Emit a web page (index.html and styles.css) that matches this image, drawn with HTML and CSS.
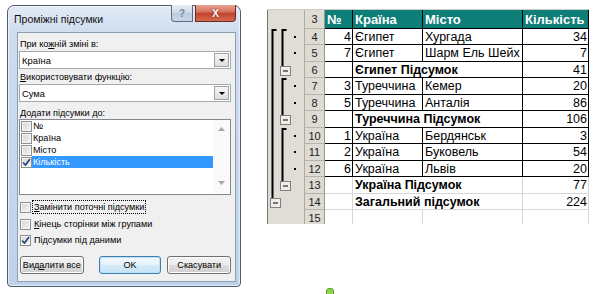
FILE: index.html
```html
<!DOCTYPE html>
<html lang="uk">
<head>
    <meta charset="UTF-8">
    <title>Проміжні підсумки</title>
    <link rel="stylesheet" href="styles.css">
</head>
<body>
    <div class="page">
        <div class="window">
            <div class="titlebar">
                <span class="title">Проміжні підсумки</span>
                <div class="caption-btns">
                    <span class="btn-help">?</span>
                    <span class="btn-close">X</span>
                </div>
            </div>
            <div class="client">
                <div class="label lbl-first">При ко<u>ж</u>ній зміні в:</div>
                <div class="combo"><span>Країна</span><span class="drop"></span></div>
                <div class="label lbl-second"><u>В</u>икористовувати функцію:</div>
                <div class="combo"><span>Сума</span><span class="drop"></span></div>
                <div class="label lbl-third"><u>Д</u>одати підсумки до:</div>
                <div class="listbox">
                    <div class="items">
                        <div class="item"><span class="cb"></span><span class="txt">№</span></div>
                        <div class="item"><span class="cb"></span><span class="txt">Країна</span></div>
                        <div class="item"><span class="cb"></span><span class="txt">Місто</span></div>
                        <div class="item sel">
                            <span class="cb"><svg width="9" height="9" viewBox="0 0 9 9"><path d="M1 4.5L3.5 7L8 1" fill="none" stroke="#21407a" stroke-width="1.6"/></svg></span>
                            <span class="txt">Кількість</span>
                        </div>
                    </div>
                    <div class="vscroll">
                        <svg width="7" height="4" viewBox="0 0 7 4"><path d="M0 4L3.5 0L7 4Z" fill="#a8a8a8"/></svg>
                        <svg width="7" height="4" viewBox="0 0 7 4"><path d="M0 0L3.5 4L7 0Z" fill="#a8a8a8"/></svg>
                    </div>
                </div>
                <div class="check check-1"><span class="cb"></span><span class="focus"><u>З</u>амінити поточні підсумки</span></div>
                <div class="check check-2"><span class="cb"></span><span class="plain"><u>К</u>інець сторінки між групами</span></div>
                <div class="check check-3">
                    <span class="cb"><svg width="9" height="9" viewBox="0 0 9 9"><path d="M1 4.5L3.5 7L8 1" fill="none" stroke="#21407a" stroke-width="1.6"/></svg></span>
                    <span class="plain">Підсумки під даними</span>
                </div>
                <div class="buttons">
                    <button class="btn btn-remove">Вид<u>а</u>лити все</button>
                    <button class="btn btn-ok">OK</button>
                    <button class="btn btn-cancel">Скасувати</button>
                </div>
            </div>
        </div>

        <div class="sheet">
            <div class="outline">
                <svg width="36" height="214" viewBox="0 0 36 214">
                    <g stroke="#000" stroke-width="2" fill="none">
                        <path d="M8.5 20H4.5V188"/>
                        <path d="M18.5 20H14.5V56"/>
                        <path d="M18.5 69H14.5V105"/>
                        <path d="M18.5 119H14.5V171"/>
                    </g>
                    <g fill="#000">
                        <rect x="26" y="26" width="2" height="2"/>
                        <rect x="26" y="42" width="2" height="2"/>
                        <rect x="26" y="75" width="2" height="2"/>
                        <rect x="26" y="92" width="2" height="2"/>
                        <rect x="26" y="125" width="2" height="2"/>
                        <rect x="26" y="141" width="2" height="2"/>
                        <rect x="26" y="158" width="2" height="2"/>
                    </g>
                    <g fill="#efeee9" stroke="#808080">
                        <rect x="12.5" y="56.5" width="10" height="9"/>
                        <rect x="12.5" y="105.5" width="10" height="9"/>
                        <rect x="12.5" y="171.5" width="10" height="9"/>
                        <rect x="2.5" y="188.5" width="10" height="9"/>
                    </g>
                    <g stroke="#000" stroke-width="1">
                        <path d="M15 61H20"/>
                        <path d="M15 110H20"/>
                        <path d="M15 176H20"/>
                        <path d="M5 193H10"/>
                    </g>
                </svg>
            </div>
            <div class="grid">
                <div class="c rh">3</div>
                <div class="c hd">№</div>
                <div class="c hd">Країна</div>
                <div class="c hd">Місто</div>
                <div class="c hd">Кількість</div>

                <div class="c rh">4</div>
                <div class="c num">4</div>
                <div class="c">Єгипет</div>
                <div class="c">Хургада</div>
                <div class="c num">34</div>

                <div class="c rh">5</div>
                <div class="c num">7</div>
                <div class="c">Єгипет</div>
                <div class="c">Шарм Ель Шейх</div>
                <div class="c num">7</div>

                <div class="c rh">6</div>
                <div class="c"></div>
                <div class="c total">Єгипет Підсумок</div>
                <div class="c num">41</div>

                <div class="c rh">7</div>
                <div class="c num">3</div>
                <div class="c">Туреччина</div>
                <div class="c">Кемер</div>
                <div class="c num">20</div>

                <div class="c rh">8</div>
                <div class="c num">5</div>
                <div class="c">Туреччина</div>
                <div class="c">Анталія</div>
                <div class="c num">86</div>

                <div class="c rh">9</div>
                <div class="c"></div>
                <div class="c total">Туреччина Підсумок</div>
                <div class="c num">106</div>

                <div class="c rh">10</div>
                <div class="c num">1</div>
                <div class="c">Україна</div>
                <div class="c">Бердянськ</div>
                <div class="c num">3</div>

                <div class="c rh">11</div>
                <div class="c num">2</div>
                <div class="c">Україна</div>
                <div class="c">Буковель</div>
                <div class="c num">54</div>

                <div class="c rh">12</div>
                <div class="c num">6</div>
                <div class="c">Україна</div>
                <div class="c">Львів</div>
                <div class="c num">20</div>

                <div class="c rh">13</div>
                <div class="c lt"></div>
                <div class="c lt total">Україна Підсумок</div>
                <div class="c lt num">77</div>

                <div class="c rh">14</div>
                <div class="c lt"></div>
                <div class="c lt total">Загальний підсумок</div>
                <div class="c lt num">224</div>

                <div class="c rh">15</div>
                <div class="c lt"></div>
                <div class="c lt"></div>
                <div class="c lt"></div>
                <div class="c lt"></div>
            </div>
        </div>
    </div>
    <span class="marker"></span>
</body>
</html>
```

FILE: styles.css
```css
* {
    margin: 0;
    padding: 0;
    box-sizing: border-box;
}
body {
    background: #fff;
    font-family: 'Liberation Sans', Arial, sans-serif;
    color: #000;
    width: 600px;
    height: 294px;
    overflow: hidden;
    position: relative;
}
.page {
    display: flex;
    align-items: flex-start;
    padding: 5px 0 0 7px;
}

/* dialog window */
.window {
    width: 234px;
    height: 282px;
    border: 1px solid #4f5d70;
    border-radius: 7px 7px 4px 4px;
    background: linear-gradient(to bottom, #e2ebf6 0, #cddcef 30px, #bfd2ea 100%);
    box-shadow: inset 0 0 0 1px rgba(255, 255, 255, 0.55);
    display: flex;
    flex-direction: column;
}
.titlebar {
    height: 26px;
    display: flex;
    justify-content: space-between;
    align-items: flex-start;
    padding-left: 6px;
}
.title {
    padding-top: 7px;
    font-size: 10.5px;
    line-height: 12px;
    color: #111;
}
.caption-btns {
    display: flex;
    gap: 2px;
    margin-top: -1px;
    margin-right: 4px;
}
.btn-help,
.btn-close {
    height: 17px;
    display: flex;
    align-items: center;
    justify-content: center;
    font-weight: bold;
    border: 1px solid #5d6b7e;
    border-top: none;
}
.btn-help {
    width: 22px;
    border-radius: 0 0 0 4px;
    background: linear-gradient(to bottom, #e9eff7, #cdd9e8 50%, #bccbdf 51%, #c9d7ea);
    color: #7b8594;
    font-size: 10px;
}
.btn-close {
    width: 41px;
    border-radius: 0 0 4px 0;
    border-color: #6b2b22;
    background: linear-gradient(to bottom, #e8a493, #d46f5a 45%, #c2432c 50%, #d36a4f);
    color: #fff;
    font-size: 10px;
    text-shadow: 0 0 2px #5a1a10;
}
.client {
    height: 250px;
    margin: 0 4px 0 9px;
    border: 1px solid #8e9fb4;
    background: #f0f0f0;
    padding: 0 4px 0 1px;
    font-size: 9.1px;
    display: flex;
    flex-direction: column;
}
.label {
    line-height: 12px;
    padding-left: 1px;
}
.lbl-first { margin-top: 5px; }
.lbl-second { margin-top: 2px; }
.lbl-third { margin-top: 5px; }
.combo {
    margin-top: 1px;
    height: 18px;
    background: #fff;
    border: 1px solid #a3a9b1;
    display: flex;
    align-items: center;
    justify-content: space-between;
    padding: 0 1px 0 2px;
    font-size: 9.4px;
}
.drop {
    width: 15px;
    height: 14px;
    border: 1px solid #a2a2a2;
    background: linear-gradient(to bottom, #f6f6f6, #dedede);
    position: relative;
}
.drop::after {
    content: "";
    position: absolute;
    left: 4px;
    top: 5px;
    border-left: 3px solid transparent;
    border-right: 3px solid transparent;
    border-top: 3px solid #000;
}
.listbox {
    height: 76px;
    background: #fff;
    border: 1px solid #828790;
    display: flex;
}
.items {
    flex: 1;
    display: flex;
    flex-direction: column;
}
.item {
    height: 12px;
    display: flex;
    align-items: center;
    padding-left: 1px;
}
.item .txt {
    flex: 1;
    height: 12px;
    line-height: 12px;
    padding-left: 1px;
}
.item.sel .txt {
    background: #3399ff;
    color: #fff;
}
.cb {
    width: 11px;
    height: 11px;
    border: 1px solid #8e8f8f;
    background: linear-gradient(135deg, #d5d5d5, #f4f4f4);
    box-shadow: inset 0 0 0 1px #f7f7f7;
    display: flex;
    align-items: center;
    justify-content: center;
    flex-shrink: 0;
}
.vscroll {
    width: 17px;
    background: #fafafa;
    display: flex;
    flex-direction: column;
    align-items: center;
    justify-content: space-between;
    padding: 7px 0 9px 0;
}
.check {
    height: 14px;
    display: flex;
    align-items: center;
    padding-left: 1px;
}
.check-1 { margin-top: 5px; }
.check-2 { margin-top: 3px; }
.check-3 { margin-top: 2px; }
.focus {
    margin-left: 1px;
    border: 1px dotted #000;
    padding: 0 1px;
    line-height: 12px;
}
.plain {
    margin-left: 3px;
}
.buttons {
    margin-top: 9px;
    display: flex;
}
.btn {
    height: 18px;
    font-family: inherit;
    font-size: 9.1px;
    color: #000;
    border: 1px solid #707070;
    border-radius: 3px;
    background: linear-gradient(to bottom, #f2f2f2 0, #ebebeb 50%, #dddddd 51%, #cfcfcf 100%);
    box-shadow: inset 0 0 0 1px #fcfcfc;
}
.btn-remove {
    margin-left: 1px;
    width: 64px;
}
.btn-ok {
    margin-left: 15px;
    width: 63px;
    border-color: #3c7fb1;
    background: linear-gradient(to bottom, #f3f9fd 0, #e6f3fb 50%, #d4ebf9 51%, #c6e3f6 100%);
    box-shadow: inset 0 0 0 1px #bfe2f8;
}
.btn-cancel {
    margin-left: 6px;
    width: 64px;
}

/* spreadsheet */
.sheet {
    margin-left: 26px;
    margin-top: 4px;
    height: 215px;
    overflow: hidden;
    display: flex;
    border-top: 1px solid #cfccc5;
}
.outline {
    width: 37px;
    height: 214px;
    background: #e0ddd6;
    border-left: 1px solid #777;
}
.outline svg {
    display: block;
}
.grid {
    display: grid;
    grid-template-columns: 21px 28px 70px 100px 66px;
    grid-template-rows: 19px repeat(6, 16px 17px);
    font-size: 12.5px;
}
.c {
    border-right: 1px solid #000;
    border-bottom: 1px solid #000;
    padding: 0 2px;
    display: flex;
    align-items: center;
    white-space: nowrap;
    overflow: hidden;
}
.rh {
    background: #dedbd3;
    border-left: 1px solid #aeaba4;
    border-right: 1px solid #9a978f;
    border-bottom: 1px solid #b6b3ab;
    justify-content: center;
    font-size: 11px;
    color: #222;
}
.hd {
    background: #0e7f78;
    color: #fff;
    font-weight: bold;
    font-size: 13px;
}
.num {
    justify-content: flex-end;
    padding-right: 1px;
}
.total {
    grid-column: span 2;
    font-weight: bold;
}
.lt {
    border-right-color: #d6d6d6;
    border-bottom-color: #d6d6d6;
}

.marker {
    position: absolute;
    left: 326px;
    top: 288px;
    width: 8px;
    height: 8px;
    border-radius: 3px;
    background: #8fd64a;
    border: 1px solid #5c9c2c;
}
```
